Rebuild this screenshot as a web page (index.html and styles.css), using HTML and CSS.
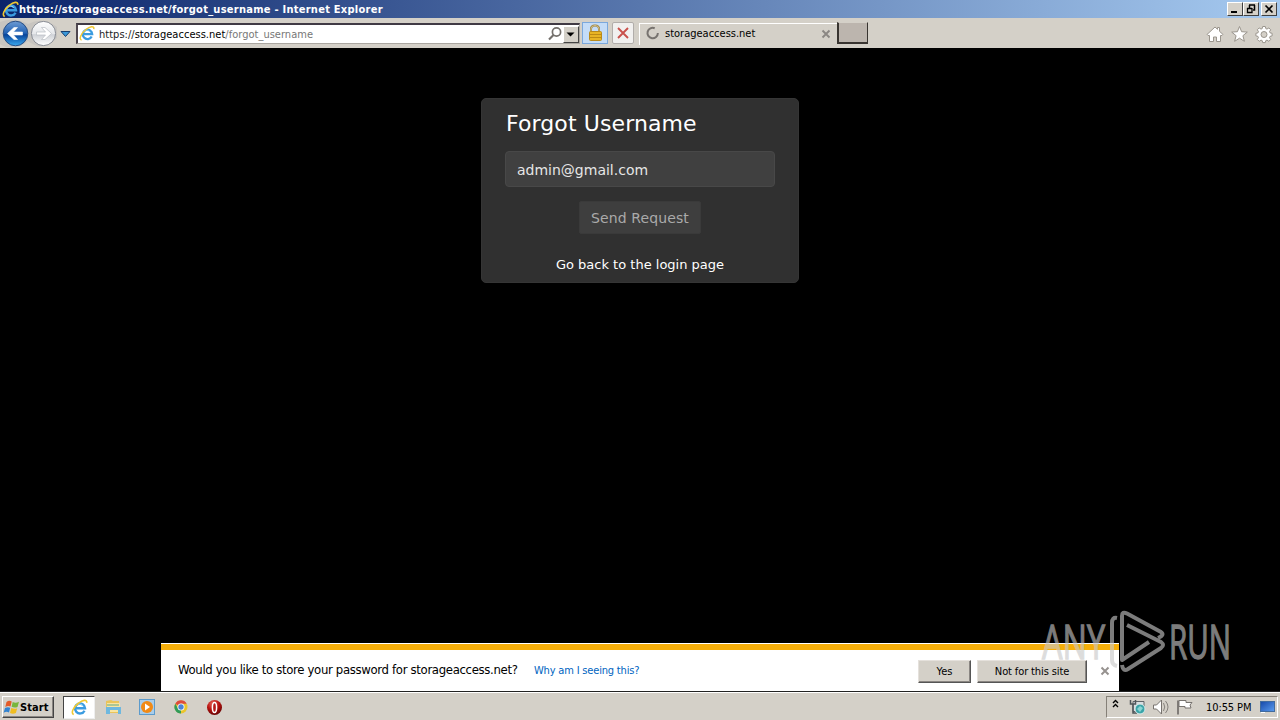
FILE: index.html
```html
<!DOCTYPE html>
<html lang="en">
<head>
<meta charset="utf-8">
<title>Forgot Username</title>
<link rel="stylesheet" href="styles.css">
</head>
<body>
<div class="screen">
  <svg class="defs" width="0" height="0">
    <defs>
      <linearGradient id="blue" x1="0" y1="0" x2="0" y2="1"><stop offset="0" stop-color="#6d9bd3"/><stop offset=".48" stop-color="#2463b4"/><stop offset=".55" stop-color="#07449b"/><stop offset="1" stop-color="#3aa8ee"/></linearGradient>
      <linearGradient id="silver" x1="0" y1="0" x2="0" y2="1"><stop offset="0" stop-color="#fff"/><stop offset=".5" stop-color="#e5e7ea"/><stop offset=".55" stop-color="#cfd2d7"/><stop offset="1" stop-color="#fff"/></linearGradient>
      <linearGradient id="screen" x1="0" y1="0" x2="1" y2="1"><stop offset="0" stop-color="#1648a8"/><stop offset="1" stop-color="#5b9df0"/></linearGradient>
      <radialGradient id="red" cx=".4" cy=".25" r=".8"><stop offset="0" stop-color="#e8695c"/><stop offset=".5" stop-color="#b8120f"/><stop offset="1" stop-color="#5e0000"/></radialGradient>
      <symbol id="ie" viewBox="0 0 16 16">
        <path d="M12.700 11A4.700 4.700 0 1 1 13.200 8.700H4.500" fill="none" stroke="#3a9be0" stroke-width="2.300"/>
        <path d="M4.600 6.600C5.500 4.300 9.800 3.900 11 6.600" fill="none" stroke="#8ad0f6" stroke-width="1"/>
        <path d="M2.600 14.500C-.5 14 2 7.600 7 4C10.500 1.200 15.500-.2 14.800 3.600" fill="none" stroke="#f0c832" stroke-width="1.500"/>
      </symbol>
    </defs>
  </svg>
  <header class="titlebar">
    <svg class="title-icon" width="17" height="17"><use href="#ie"/></svg>
    <span class="title-text">https://storageaccess.net/forgot_username - Internet Explorer</span>
    <div class="window-buttons">
      <span class="wb"><svg width="14" height="12"><path d="M3 9h6" stroke="#000" stroke-width="2"/></svg></span>
      <span class="wb"><svg width="14" height="12"><path d="M5 2h6M5.500 2v3M10.500 2v5H9" fill="none" stroke="#000" stroke-width="1.500"/><path d="M3 5.500h5M3.500 5v4.500h4.500V5" fill="none" stroke="#000" stroke-width="1.300"/></svg></span>
      <span class="wb close"><svg width="14" height="12"><path d="M3.500 2.500l7 7M10.500 2.500l-7 7" stroke="#000" stroke-width="1.700"/></svg></span>
    </div>
  </header>
  <nav class="toolbar">
    <svg class="nav-buttons" width="75" height="30">
      <path d="M0 4Q14-2 28 6Q43-2 57 9V20Q43 35 28 23Q14 35 0 26Z" fill="#c8c5c0"/>
      <circle cx="15.500" cy="15.500" r="12.300" fill="url(#blue)" stroke="#274d83"/>
      <circle cx="43.500" cy="15.500" r="12.100" fill="url(#silver)" stroke="#898d95"/>
      <path d="M7.500 15.500L14 9.500H17.500L13.500 14H22.500V17H13.500L17.500 21.500H14Z" fill="#fff" stroke="#fff" stroke-width=".6"/>
      <path d="M51.500 15.500L45 9.500H41.500L45.500 14H36.500V17H45.500L41.500 21.500H45Z" fill="#fff" stroke="#b9bdc3" stroke-width=".7"/>
      <path d="M61 13.500h9l-4.500 5z" fill="#3a98d8" stroke="#173f70"/>
    </svg>
    <div class="address">
      <svg class="page-icon" width="16" height="17"><use href="#ie"/></svg>
      <span class="url"><span class="muted">https://</span>storageaccess.net<span class="muted path">/forgot_username</span></span>
      <svg class="search" width="16" height="16"><circle cx="9.500" cy="6" r="4.100" fill="none" stroke="#74706c" stroke-width="1.700"/><path d="M6.500 9L2 13.500" stroke="#74706c" stroke-width="2.200"/></svg>
      <span class="drop"><svg width="12" height="15"><path d="M2.500 5.500h8L6.500 9.500z"/></svg></span>
    </div>
    <span class="lock"><svg width="24" height="20"><path d="M8 9V6Q8 2.500 12 2.500T16 6V9" fill="none" stroke="#987c37" stroke-width="2"/><path d="M8 9V6Q8 2.500 12 2.500T16 6V9" fill="none" stroke="#e9dcae" stroke-width=".7"/><rect x="6.500" y="8.500" width="12" height="9" rx="1" fill="#e8b424" stroke="#b88a1c"/><path d="M7 11.500h11M7 14.500h11" stroke="#bd8a14"/></svg></span>
    <span class="stop"><svg width="20" height="20"><path d="M5 5L15 15M15 5L5 15" stroke="#c9504b" stroke-width="1.900"/></svg></span>
    <div class="tab">
      <svg width="15" height="15"><path d="M8.500 2.200A5.200 5.200 0 1 1 3 4" fill="none" stroke="#77736f" stroke-width="2" transform="rotate(75 7.500 7.500)"/></svg>
      <span class="tab-text">storageaccess.net</span>
      <svg class="tab-close" width="10" height="10"><path d="M1.500 1.500l7 7M8.500 1.500l-7 7" stroke="#8b8783" stroke-width="1.900"/></svg>
    </div>
    <span class="new-tab"></span>
    <svg class="tools" width="70" height="22" fill="#fff" stroke="#9a958d">
      <path d="M2 11.500L10 4l2.500 2.300V4.500h2V8.300L18 11.500l-1 1h-1.500V18.500h-4v-4.500h-3v4.500h-4V12.500H3z"/>
      <path d="M34.500 3.500l2.100 5.200 5.700.4-4.400 3.600 1.500 5.600-4.900-3.100-4.900 3.100 1.500-5.600-4.400-3.600 5.700-.4z"/>
      <path d="M57.700 3.500h2.600l.5 2.100 1.200.5 1.900-1.200 1.800 1.900-1.200 1.800.5 1.200 2.100.5v2.600l-2.100.5-.5 1.200 1.200 1.800-1.800 1.900-1.900-1.200-1.200.5-.5 2h-2.600l-.5-2-1.200-.5-1.800 1.200-1.900-1.900 1.200-1.800-.5-1.200-2.100-.5v-2.600l2.100-.5.5-1.200-1.200-1.800 1.900-1.900 1.800 1.200 1.200-.5z"/>
      <circle cx="59" cy="11.500" r="3" fill="#d4d0c8"/>
    </svg>
  </nav>
  <main class="page">
    <section class="card">
      <h1>Forgot Username</h1>
      <div class="field">admin@gmail.com</div>
      <button class="send">Send Request</button>
      <a class="back">Go back to the login page</a>
    </section>
    <aside class="notice">
      <span class="question">Would you like to store your password for storageaccess.net?</span>
      <a class="why">Why am I seeing this?</a>
      <button class="classic yes">Yes</button>
      <button class="classic no">Not for this site</button>
      <svg class="notice-close" width="10" height="10"><path d="M1.500 1.500l7 7M8.500 1.500l-7 7" stroke="#96928f" stroke-width="2"/></svg>
    </aside>
  </main>
  <footer class="taskbar">
    <div class="start"><svg width="18" height="17"><path d="M3.500 3Q6 1 8.700 2.500L7.500 7.500Q5 6.500 2.300 8z" fill="#e45b28"/><path d="M9.700 3Q12.500 4.500 16 2.800L14.500 8Q11.500 9.200 8.600 7.800z" fill="#78b63d"/><path d="M2 9Q4.600 7.500 7.200 8.700L6 13.500Q3.500 12 .6 13.700z" fill="#3283d1"/><path d="M8.300 9Q11.500 10.300 14.200 9.200L12.900 14Q10 15.500 7 14z" fill="#f0bd20"/></svg><span>Start</span></div>
    <div class="task-active"><svg width="17" height="17"><use href="#ie"/></svg></div>
    <svg class="quick" width="126" height="22">
      <path d="M5 5l5-1 2 1h6v12H5z" fill="#eac45a"/><path d="M6 7h13v9H6z" fill="#f8e5a0"/><path d="M5 11h15v7h-3v-4H9v4H5z" fill="#6eb8df"/><path d="M6 9h12" stroke="#61a885"/>
      <rect x="38.500" y="3.500" width="15" height="15" fill="#a9cdea" stroke="#5c9bcc"/><circle cx="46" cy="11" r="6" fill="#f18a16"/><path d="M44 7.500l5 3.500-5 3.500z" fill="#fff"/>
      <circle cx="80" cy="11" r="6.500" fill="#eac52c"/><path d="M80 11L74.300 7.700A6.500 6.500 0 0 1 85.700 7.700H80z" fill="#dd4b3d"/><path d="M80 11L80 17.500A6.500 6.500 0 0 1 74.300 7.700L77 12.500z" fill="#319b59"/><circle cx="80" cy="11" r="3.500" fill="#fff"/><circle cx="80" cy="11" r="2.700" fill="#4b83d7"/>
      <circle cx="113.500" cy="11.500" r="7.500" fill="url(#red)"/><ellipse cx="113.500" cy="11.500" rx="2.100" ry="5" fill="#b51b19" stroke="#fff" stroke-width="1.500"/>
    </svg>
    <div class="tray">
      <svg width="92" height="21">
        <path d="M6 6l2.500-2.500L11 6M6 10l2.500-2.500L11 10" fill="none" stroke="#000" stroke-width="1.400"/>
        <path d="M26 4.500h11v10H26z" fill="#d8dde0" stroke="#606468"/><path d="M23.500 3v4h5V3M26 7v9h4" fill="none" stroke="#50565a" stroke-width="1.500"/><circle cx="33" cy="12" r="5" fill="#3aa4a8" stroke="#dcebea"/><path d="M30 12l3-3 3 2-3 4z" fill="#8bd4d3"/>
        <path d="M46.500 8h3l5-5v14l-5-5h-3z" fill="#fff" stroke="#77736f"/><path d="M56.500 6Q59 10 56.500 14M58.500 4Q63.500 10 58.500 16" fill="none" stroke="#85817c"/>
        <path d="M71 3.500v14" stroke="#77736f" stroke-width="1.800"/><path d="M72 3.500h7v2h6L83 8l1 3h-6v-1.500h-6z" fill="#fff" stroke="#77736f"/>
      </svg>
      <span class="clock">10:55 PM</span>
      <svg class="desktop" width="17" height="14"><rect x="1.500" y="1.500" width="14" height="10" fill="url(#screen)" stroke="#416b9e"/><path d="M2 12.500h4" stroke="#fff"/></svg>
    </div>
  </footer>
  <svg class="watermark" width="200" height="70" fill="none" stroke="#c8c8c8">
    <g class="brand"><text x="5" y="53" textLength="63" lengthAdjust="spacingAndGlyphs">ANY</text><text x="132" y="53" textLength="62" lengthAdjust="spacingAndGlyphs">RUN</text></g>
    <g stroke-width="4" stroke-linejoin="round"><path d="M80 12Q75 11 75 17V54Q75 59 80 60"/><path d="M121 32Q128 29 124 26L90 7.500Q85 5 85 10V54L112 36"/><path d="M90 19L124 36Q128 39 124 42L91 63Q86 66 85 59"/></g>
  </svg>
</div>
</body>
</html>
```
FILE: styles.css
```css
* { box-sizing: border-box; }
body { margin: 0; }
.defs { position: absolute; }
.screen { position: relative; width: 1280px; height: 720px; overflow: hidden; display: flex; flex-direction: column; background: #000; font: 11px "DejaVu Sans Condensed", "DejaVu Sans", sans-serif; color: #000; white-space: nowrap; }
svg { display: block; flex: none; }
.titlebar { height: 18px; flex: none; display: flex; align-items: center; padding: 0 3px 0 2px; background: linear-gradient(90deg, #0a246a, #a6caf0); color: #fff; }
.title-text { font-weight: bold; letter-spacing: .26px; }
.window-buttons { display: flex; margin-left: auto; }
.wb { width: 16px; height: 14px; background: #d4d0c8; border: 1px solid; border-color: #fff #404040 #404040 #fff; }
.close { margin-left: 2px; }
.toolbar { height: 30px; flex: none; display: flex; background: #d4d0c8; }
.address { margin: 5px 0 0 1px; width: 504px; height: 21px; display: flex; align-items: center; border: 1px solid #aaa6a0; border-top: 2px solid #403a44; border-left: 2px solid #504850; background: #fff; }
.page-icon { margin: -2px 0 0 1px; }
.url { margin-left: 4px; letter-spacing: .02px; }
.muted { color: #777; }
.url .muted:first-child { color: #222; }
.search { margin-left: auto; }
.drop { width: 16px; height: 17px; background: #d4d0c8; border: 1px solid; border-color: #fff #444 #444 #fff; }
.lock { width: 26px; height: 22px; margin: 4px 0 0 2px; background: #c4dcf7; border: 1px solid #7ba8dc; }
.stop { width: 22px; height: 22px; margin: 4px 0 0 4px; background: #f1f0ef; border: 1px solid #b1adaa; border-radius: 2px; }
.tab { display: flex; align-items: center; width: 198px; height: 22px; margin: 5px 0 0 5px; padding: 0 0 2px 5px; border-left: 1px solid #fff; border-top: 1px solid #fff; }
.tab-text { margin-left: 5px; letter-spacing: 0; }
.tab-close { margin-left: auto; margin-right: 6px; }
.new-tab { width: 31px; height: 22px; margin-top: 4px; background: #bcb5ae; border: 2px solid; border-color: #d4d0c8 #383430 #383430 #383430; border-width: 1px 1px 2px 2px; }
.tools { margin: 5px 5px 0 auto; }
.page { height: 643px; flex: none; display: flex; flex-direction: column; align-items: center; background: #000; }
.card { width: 318px; height: 185px; margin-top: 50px; padding: 11px 24px 0; display: flex; flex-direction: column; align-items: center; border-radius: 5px; background: #303030; border: 1px solid #353535; font-family: "DejaVu Sans", sans-serif; color: #fff; }
h1 { align-self: stretch; margin: 0; font-size: 22px; line-height: 27px; font-weight: normal; letter-spacing: .1px; }
.field { width: 270px; height: 36px; margin-top: 14px; padding-left: 11px; border: 1px solid #484848; border-radius: 4px; background: #404040; color: #e6e6e6; font-size: 14px; line-height: 36px; }
.send { width: 122px; height: 33px; margin-top: 14px; padding: 0; border: 1px solid #3a3a3a; border-radius: 2px; background: #3e3e3e; color: #aaa; font: 14px "DejaVu Sans", sans-serif; letter-spacing: .1px; }
.back { margin-top: 22px; font-size: 13px; line-height: 17px; }
.notice { width: 958px; height: 48px; margin-top: auto; padding-left: 17px; display: flex; align-items: center; background: #fff; border-top: 1px solid #fff; box-shadow: inset 0 6px #f5ae0a; padding-top: 7px; }
.question { margin-top: -3px; font-size: 13px; letter-spacing: -.33px; width: 356px; }
.why { margin-top: -2px; color: #0064bf; letter-spacing: -.18px; }
.classic { height: 23px; padding: 0; background: #d4d0c8; border: 1px solid; border-color: #e5e1dc #555 #555 #e5e1dc; box-shadow: inset -1px -1px #8a8682; font: 11px "DejaVu Sans Condensed", "DejaVu Sans", sans-serif; color: #000; }
.yes { width: 53px; margin-left: auto; }
.no { width: 110px; margin-left: 6px; letter-spacing: -.12px; }
.notice-close { margin: 0 9px 0 13px; }
.taskbar { height: 29px; flex: none; display: flex; align-items: center; background: #d4d0c8; border-top: 1px solid #222; box-shadow: inset 0 1px #fff; padding: 2px 2px 0; }
.start { display: flex; align-items: center; width: 52px; height: 22px; border: 1px solid; border-color: #fff #444 #444 #fff; box-shadow: inset -1px -1px #8a8682; font-weight: bold; }
.start span { margin-left: -1px; letter-spacing: .1px; }
.task-active { width: 32px; height: 23px; margin-left: 9px; padding: 2px 7px; background: #fff; border: 1px solid; border-color: #444 #eee #eee #444; }
.quick { margin-left: 6px; }
.tray { display: flex; align-items: center; width: 172px; height: 22px; margin-left: auto; border: 1px solid; border-color: #858078 #fff #fff #858078; }
.clock { margin-left: 7px; letter-spacing: -.1px; }
.desktop { margin: 0 1px 0 auto; }
.watermark { position: absolute; left: 1037px; top: 606px; overflow: visible; opacity: .62; }
.brand { font: 48px "Open Sans", sans-serif; fill: #c8c8c8; stroke-width: 1.3px; }
```
